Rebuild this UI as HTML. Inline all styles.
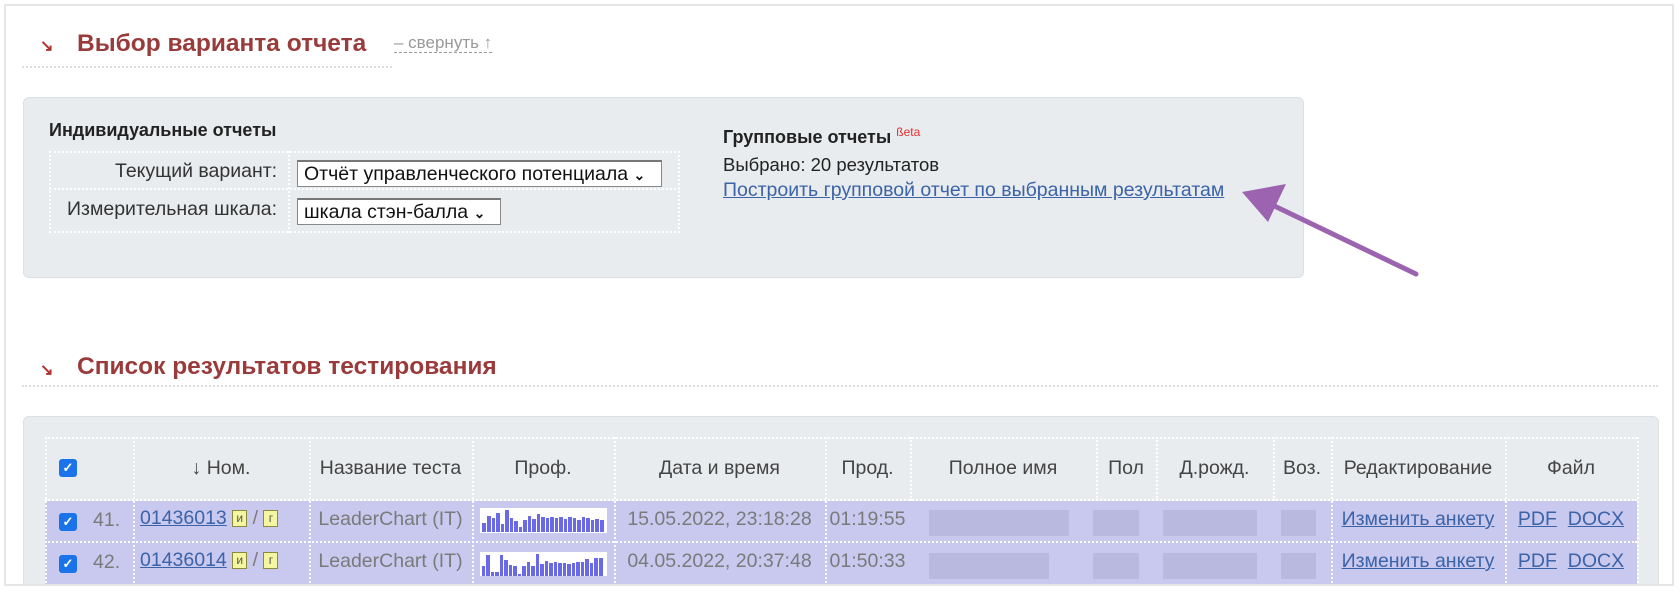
<!DOCTYPE html>
<html><head><meta charset="utf-8">
<style>
*{box-sizing:border-box;margin:0;padding:0}
html,body{width:1680px;height:592px;overflow:hidden}
body{background:#fff;font-family:"Liberation Sans",Arial,sans-serif;position:relative;color:#222}
.a{position:absolute;white-space:nowrap}
.frame{left:4px;top:4px;width:1670px;height:584px;border:2px solid #e6e6e6}
.title{font-size:24.5px;font-weight:bold;color:#9a3b3b;line-height:28px}
.ic{font-size:16px;font-weight:bold;color:#b03030}
.dl{height:0;border-top:2px dotted #ddd}
.panel{background:#e9ecee;border:1px solid #dde0e3;border-radius:6px}
.sel{background:#fff;border:1px solid #888;border-top:2px solid #777;font-size:19.5px;line-height:24px;padding:0 6px;color:#111}
.lnk{color:#3b63a8;text-decoration:underline}
.cell{position:absolute;font-size:19.5px;color:#444;text-align:center}
.vd{position:absolute;width:0;border-left:2px dotted #fff}
.hd{position:absolute;height:0;border-top:2px dotted #fff}
.row{position:absolute;left:45px;width:1592px;background:#c9c9ef}
.cb{position:absolute;width:18px;height:18px;background:#1a73e8;border-radius:3px;color:#fff;font-size:13px;line-height:18px;text-align:center;font-weight:bold}
.g{color:#7a7a7a}
.blur{position:absolute;background:#b9b8de}
.badge{display:inline-block;width:15px;height:17px;background:#f4f7a0;border:1px solid #8a8a40;font-size:12px;line-height:15px;text-align:center;color:#555;vertical-align:2px}
</style></head><body>
<div class="a frame"></div>

<div class="a ic" style="left:40px;top:36px">↘</div>
<div class="a title" style="left:77px;top:30px">Выбор варианта отчета</div>
<div class="a" style="left:394px;top:33px;font-size:17px;color:#999;border-bottom:1px dashed #999;line-height:19px">– свернуть ↑</div>
<div class="a dl" style="left:22px;top:66px;width:370px"></div>

<div class="a panel" style="left:23px;top:97px;width:1281px;height:181px"></div>
<div class="a" style="left:49px;top:120px;font-size:18px;font-weight:bold;color:#222">Индивидуальные отчеты</div>
<div class="a" style="left:49px;top:151px;width:631px;height:82px;border:2px dotted #fff"></div>
<div class="a" style="left:49px;top:188px;width:631px;border-top:2px dotted #fff"></div>
<div class="a" style="left:288px;top:151px;height:82px;border-left:2px dotted #fff"></div>
<div class="a" style="left:115px;top:160px;font-size:19.5px;color:#333">Текущий вариант:</div>
<div class="a sel" style="left:297px;top:160px;width:365px;height:27px">Отчёт управленческого потенциала <b style="font-size:14px">⌄</b></div>
<div class="a" style="left:67px;top:198px;font-size:19.5px;color:#333">Измерительная шкала:</div>
<div class="a sel" style="left:297px;top:198px;width:204px;height:27px">шкала стэн-балла <b style="font-size:14px">⌄</b></div>

<div class="a" style="left:723px;top:125px;font-size:18px;font-weight:bold;color:#222">Групповые отчеты <sup style="color:#e03030;font-size:12px;font-weight:normal">ßeta</sup></div>
<div class="a" style="left:723px;top:154px;font-size:18.5px;color:#222">Выбрано: 20 результатов</div>
<div class="a lnk" style="left:723px;top:179px;font-size:19.5px">Построить групповой отчет по выбранным результатам</div>

<svg class="a" style="left:0;top:0" width="1680" height="592">
<line x1="1416" y1="274" x2="1262" y2="200" stroke="#9b63b0" stroke-width="5" stroke-linecap="round"/>
<polygon points="1242,192 1286,184 1268,222" fill="#9b63b0"/>
</svg>

<div class="a ic" style="left:40px;top:360px">↘</div>
<div class="a title" style="left:77px;top:353px">Список результатов тестирования</div>
<div class="a dl" style="left:22px;top:385px;width:1636px"></div>

<div class="a panel" style="left:23px;top:416px;width:1636px;height:180px"></div>

<div class="row" style="top:501px;height:83px"></div>
<div class="hd" style="left:45px;top:437px;width:1592px"></div>
<div class="hd" style="left:45px;top:499px;width:1592px"></div>
<div class="hd" style="left:45px;top:541px;width:1592px"></div>
<div class="vd" style="left:45px;top:437px;height:150px"></div>
<div class="vd" style="left:133px;top:437px;height:150px"></div>
<div class="vd" style="left:309px;top:437px;height:150px"></div>
<div class="vd" style="left:472px;top:437px;height:150px"></div>
<div class="vd" style="left:614px;top:437px;height:150px"></div>
<div class="vd" style="left:825px;top:437px;height:150px"></div>
<div class="vd" style="left:910px;top:437px;height:64px"></div>
<div class="vd" style="left:1096px;top:437px;height:64px"></div>
<div class="vd" style="left:1156px;top:437px;height:64px"></div>
<div class="vd" style="left:1273px;top:437px;height:64px"></div>
<div class="vd" style="left:1331px;top:437px;height:150px"></div>
<div class="vd" style="left:1505px;top:437px;height:150px"></div>
<div class="vd" style="left:1637px;top:437px;height:150px"></div>

<div class="cb" style="left:59px;top:459px">✓</div>
<div class="cell" style="left:133px;width:176px;top:457px">↓ Ном.</div>
<div class="cell" style="left:309px;width:163px;top:457px">Название теста</div>
<div class="cell" style="left:472px;width:142px;top:457px">Проф.</div>
<div class="cell" style="left:614px;width:211px;top:457px">Дата и время</div>
<div class="cell" style="left:825px;width:85px;top:457px">Прод.</div>
<div class="cell" style="left:910px;width:186px;top:457px">Полное имя</div>
<div class="cell" style="left:1096px;width:60px;top:457px">Пол</div>
<div class="cell" style="left:1156px;width:117px;top:457px">Д.рожд.</div>
<div class="cell" style="left:1273px;width:58px;top:457px">Воз.</div>
<div class="cell" style="left:1331px;width:174px;top:457px">Редактирование</div>
<div class="cell" style="left:1505px;width:132px;top:457px">Файл</div>

<!-- row 1 -->
<div class="cb" style="left:59px;top:513px">✓</div>
<div class="cell g" style="left:93px;top:509px">41.</div>
<div class="cell" style="left:140px;top:507px;text-align:left"><span class="lnk">01436013</span> <span class="badge">и</span> <span class="g">/</span> <span class="badge">г</span></div>
<div class="cell g" style="left:309px;width:163px;top:508px">LeaderChart (IT)</div>
<svg class="a" style="left:480px;top:508px" width="127" height="25"><rect width="127" height="25" fill="#fff"/>
<g fill="#6a6ae8"><rect x="2" y="15" width="4" height="9"/><rect x="7" y="8" width="4" height="16"/><rect x="12" y="10" width="3" height="14"/><rect x="16" y="5" width="4" height="19"/><rect x="21" y="16" width="3" height="8"/><rect x="25" y="2" width="4" height="22"/><rect x="30" y="10" width="3" height="14"/><rect x="34" y="13" width="4" height="11"/><rect x="39" y="19" width="3" height="5"/><rect x="43" y="12" width="4" height="12"/><rect x="48" y="8" width="3" height="16"/><rect x="52" y="11" width="4" height="13"/><rect x="57" y="6" width="3" height="18"/><rect x="61" y="9" width="4" height="15"/><rect x="66" y="10" width="3" height="14"/><rect x="70" y="9" width="4" height="15"/><rect x="75" y="10" width="3" height="14"/><rect x="79" y="9" width="4" height="15"/><rect x="84" y="11" width="3" height="13"/><rect x="88" y="9" width="4" height="15"/><rect x="93" y="10" width="3" height="14"/><rect x="97" y="12" width="4" height="12"/><rect x="102" y="9" width="3" height="15"/><rect x="106" y="10" width="4" height="14"/><rect x="111" y="12" width="3" height="12"/><rect x="115" y="11" width="4" height="13"/><rect x="120" y="12" width="4" height="12"/></g></svg>
<div class="cell g" style="left:614px;width:211px;top:508px">15.05.2022, 23:18:28</div>
<div class="cell g" style="left:825px;width:85px;top:508px">01:19:55</div>
<div class="blur" style="left:929px;top:510px;width:140px;height:26px"></div>
<div class="blur" style="left:1093px;top:510px;width:46px;height:26px"></div>
<div class="blur" style="left:1163px;top:510px;width:94px;height:26px"></div>
<div class="blur" style="left:1281px;top:510px;width:35px;height:26px"></div>
<div class="cell" style="left:1331px;width:174px;top:508px"><span class="lnk">Изменить анкету</span></div>
<div class="cell" style="left:1505px;width:132px;top:508px"><span class="lnk">PDF</span>&nbsp; <span class="lnk">DOCX</span></div>

<!-- row 2 -->
<div class="cb" style="left:59px;top:555px">✓</div>
<div class="cell g" style="left:93px;top:551px">42.</div>
<div class="cell" style="left:140px;top:549px;text-align:left"><span class="lnk">01436014</span> <span class="badge">и</span> <span class="g">/</span> <span class="badge">г</span></div>
<div class="cell g" style="left:309px;width:163px;top:550px">LeaderChart (IT)</div>
<svg class="a" style="left:480px;top:552px" width="127" height="24"><rect width="127" height="24" fill="#fff"/>
<g fill="#6a6ae8"><rect x="2" y="14" width="3" height="10"/><rect x="6" y="3" width="4" height="21"/><rect x="11" y="20" width="3" height="4"/><rect x="15" y="20" width="4" height="4"/><rect x="20" y="3" width="3" height="21"/><rect x="24" y="8" width="4" height="16"/><rect x="29" y="13" width="3" height="11"/><rect x="33" y="14" width="4" height="10"/><rect x="38" y="22" width="3" height="2"/><rect x="42" y="14" width="4" height="10"/><rect x="47" y="10" width="3" height="14"/><rect x="51" y="14" width="4" height="10"/><rect x="56" y="2" width="3" height="22"/><rect x="60" y="12" width="4" height="12"/><rect x="65" y="9" width="3" height="15"/><rect x="69" y="11" width="4" height="13"/><rect x="74" y="10" width="3" height="14"/><rect x="78" y="11" width="4" height="13"/><rect x="83" y="11" width="3" height="13"/><rect x="87" y="12" width="4" height="12"/><rect x="92" y="11" width="3" height="13"/><rect x="96" y="10" width="4" height="14"/><rect x="101" y="10" width="3" height="14"/><rect x="105" y="7" width="4" height="17"/><rect x="110" y="11" width="3" height="13"/><rect x="114" y="6" width="4" height="18"/><rect x="119" y="6" width="4" height="18"/></g></svg>
<div class="cell g" style="left:614px;width:211px;top:550px">04.05.2022, 20:37:48</div>
<div class="cell g" style="left:825px;width:85px;top:550px">01:50:33</div>
<div class="blur" style="left:929px;top:553px;width:120px;height:26px"></div>
<div class="blur" style="left:1093px;top:553px;width:46px;height:26px"></div>
<div class="blur" style="left:1163px;top:553px;width:94px;height:26px"></div>
<div class="blur" style="left:1281px;top:553px;width:35px;height:26px"></div>
<div class="cell" style="left:1331px;width:174px;top:550px"><span class="lnk">Изменить анкету</span></div>
<div class="cell" style="left:1505px;width:132px;top:550px"><span class="lnk">PDF</span>&nbsp; <span class="lnk">DOCX</span></div>

<div class="a" style="left:0;top:586px;width:1680px;height:6px;background:#fff"></div>
<div class="a" style="left:4px;top:584px;width:1670px;height:2px;background:#e6e6e6"></div>
</body></html>
